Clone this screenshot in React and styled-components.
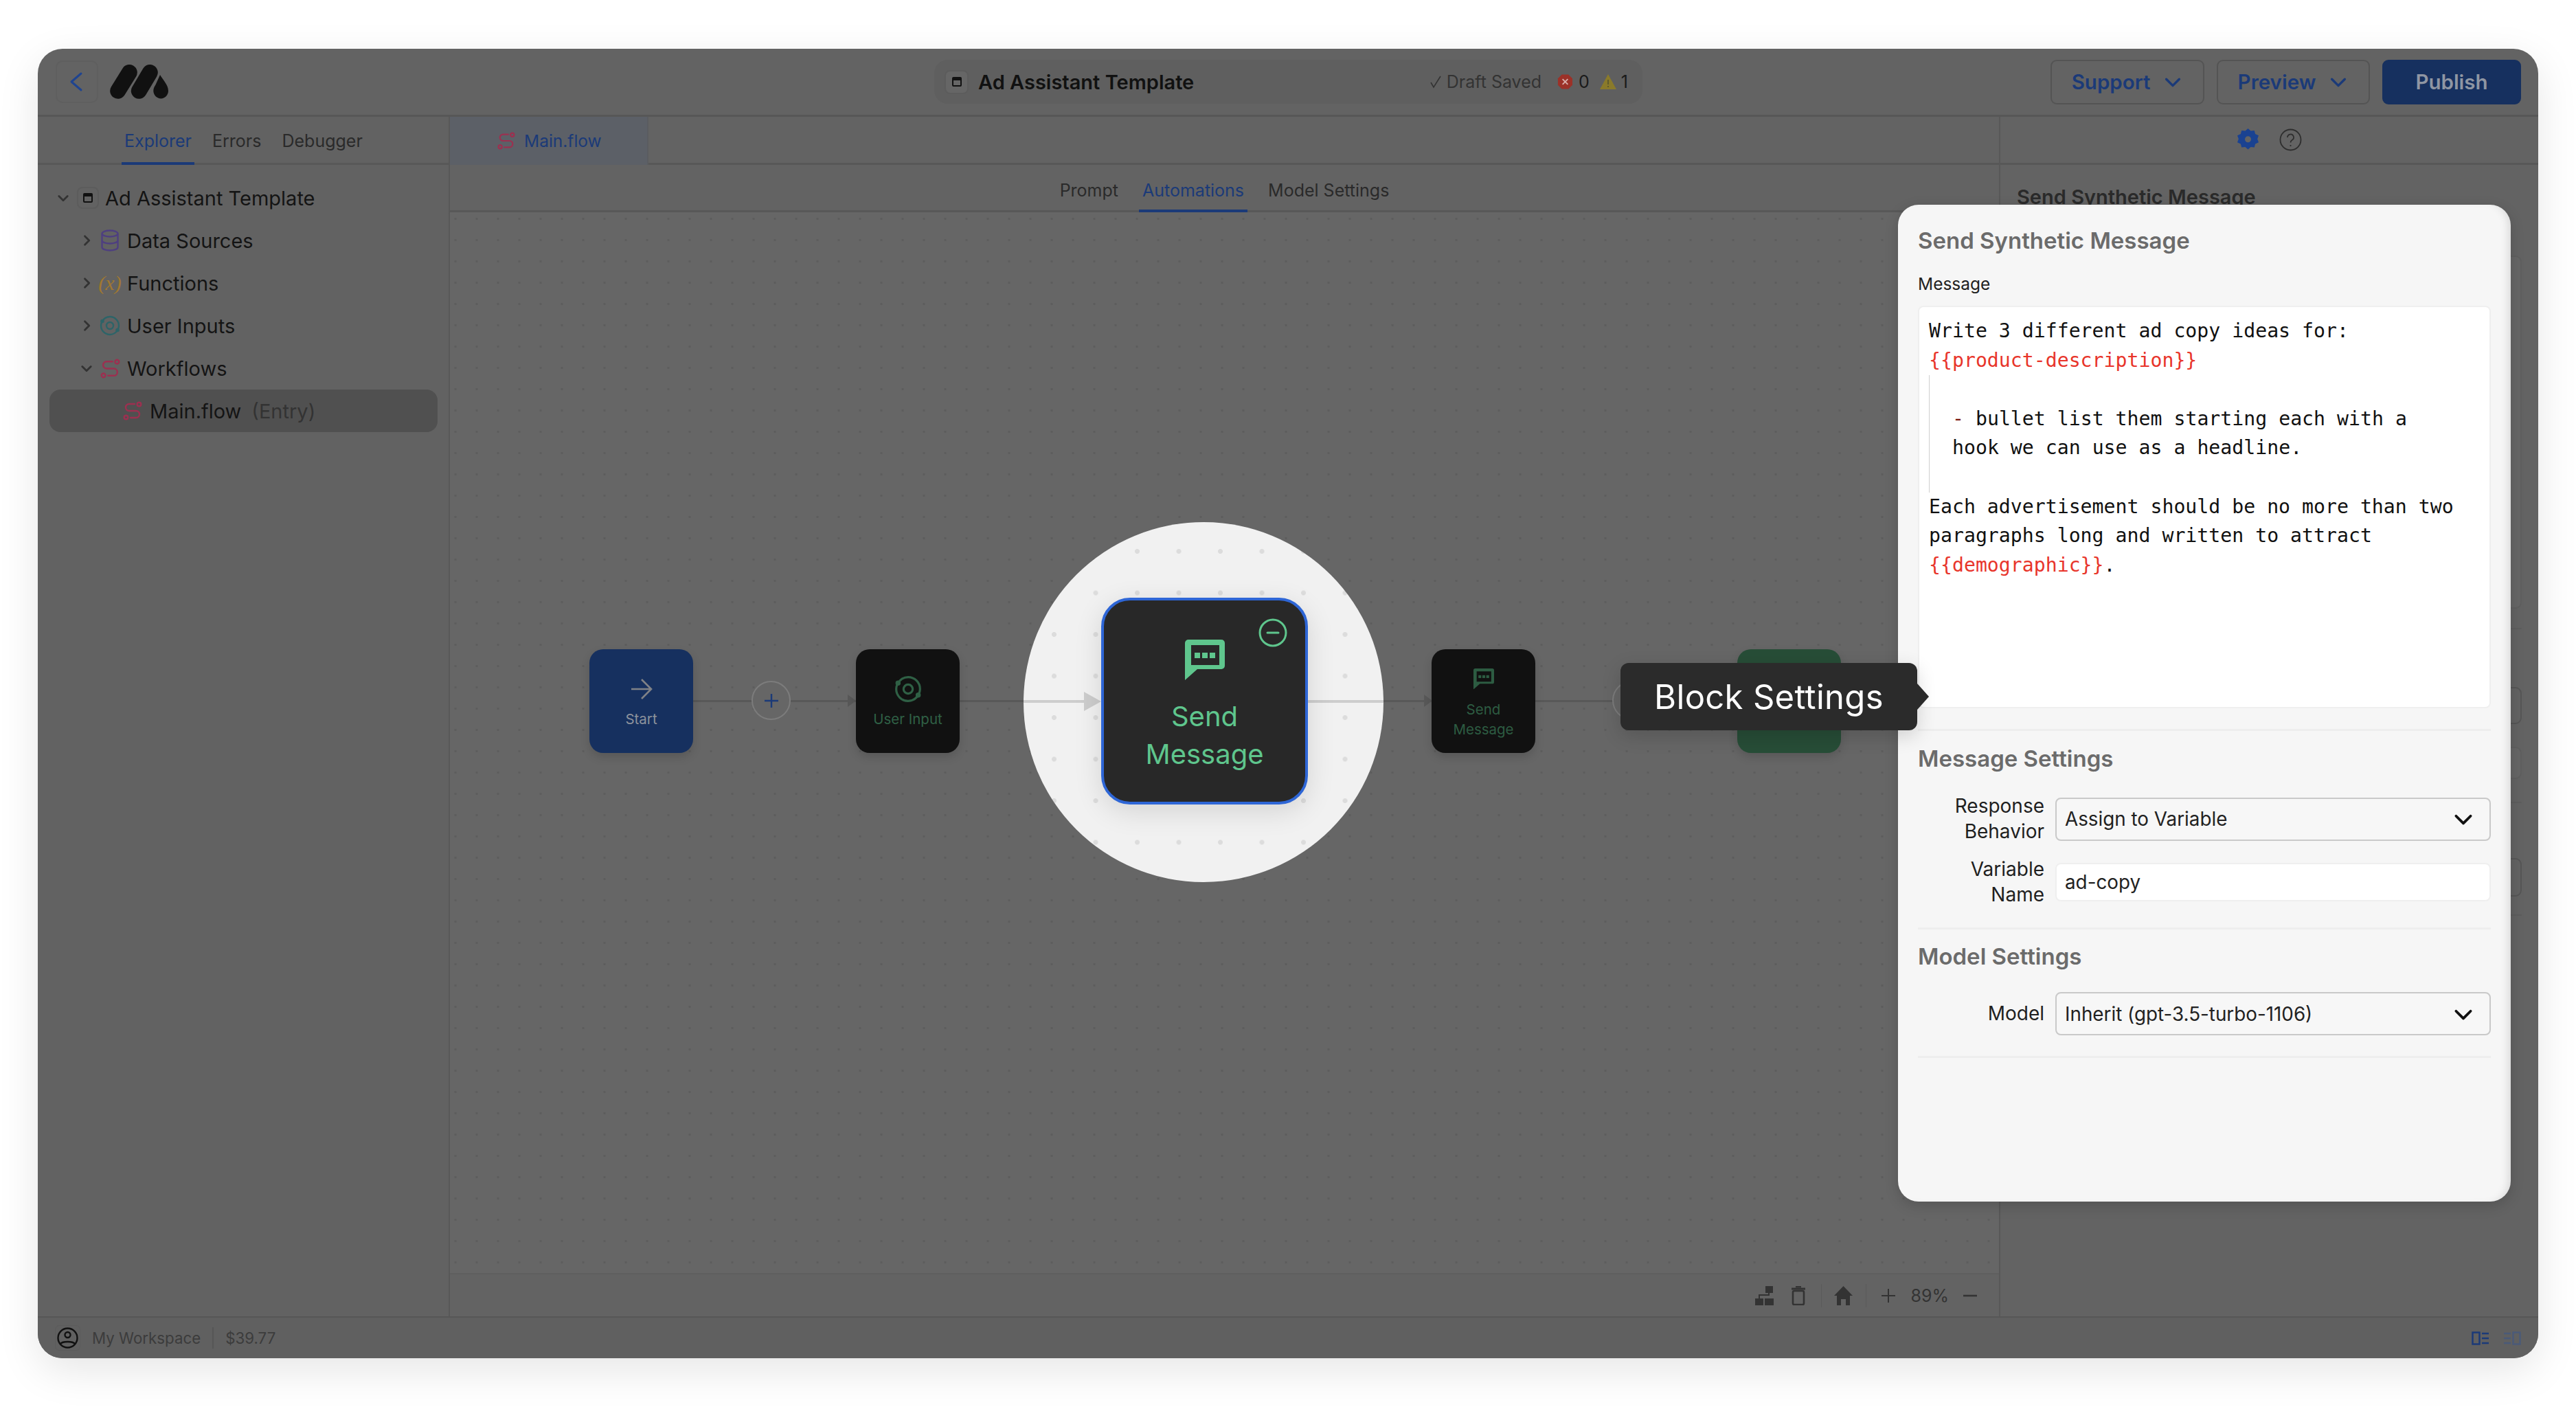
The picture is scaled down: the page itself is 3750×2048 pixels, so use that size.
import React from 'react';
import styled, { createGlobalStyle } from 'styled-components';

const GlobalStyle = createGlobalStyle`
  html, body { margin: 0; padding: 0; background: #fff; }
  body { font-family: Inter, "Liberation Sans", sans-serif; }
  * { box-sizing: border-box; }
`;

const DOT = (bg, dot, size, r) => `
  background-color: ${bg};
  background-image: radial-gradient(circle, ${dot} ${r}px, transparent ${r + 0.6}px);
  background-size: ${size}px ${size}px;
`;

const Page = styled.div`
  width: 3750px;
  height: 2048px;
  padding: 71px 55px 71px 55px;
  overflow: hidden;
  background: #fff;
`;

const Shell = styled.div`
  position: relative;
  width: 3640px;
  height: 1906px;
  display: flex;
  flex-direction: column;
  background: #636363;
  border-radius: 36px;
  box-shadow: 0 18px 60px rgba(0, 0, 0, 0.1);
`;

const Header = styled.header`
  height: 99px;
  flex: none;
  display: flex;
  align-items: center;
  padding: 0 25px 0 26px;
  border-bottom: 3px solid #575757;
`;

const BackBtn = styled.div`
  width: 62px;
  height: 62px;
  display: flex;
  align-items: center;
  justify-content: center;
  border: 2px solid #5f5f5f;
  border-radius: 10px;
`;

const LogoWrap = styled.div`
  margin-left: 17px;
  display: flex;
`;

const HeaderCenter = styled.div`
  flex: 1;
  display: flex;
  padding-left: 1114px;
`;

const DocPill = styled.div`
  width: 1031px;
  height: 64px;
  display: flex;
  align-items: center;
  padding: 0 21px 0 15px;
  background: #5f5f5f;
  border-radius: 20px;
  color: #111;
`;

const DocBox = styled.div`
  width: ${p => p.$size}px;
  height: ${p => p.$size}px;
  flex: none;
  display: flex;
  align-items: center;
  justify-content: center;
  background: ${p => p.$fill ? '#666' : 'transparent'};
  border: 2px solid #5c5c5c;
  border-radius: 8px;
`;

const DocTitle = styled.div`
  margin-left: 14px;
  font-size: 29px;
  font-weight: 600;
  color: #111;
  white-space: nowrap;
`;

const SaveGroup = styled.div`
  margin-left: auto;
  display: flex;
  align-items: center;
  font-size: 25px;
  color: #333;
`;

const Saved = styled.span`
  margin: 0 23px 0 6px;
`;

const Count = styled.span`
  margin: 0 14px 0 8px;
  color: #1a1a1a;
  &:last-child { margin: 0 0 0 6px; }
`;

const HeaderBtn = styled.div`
  width: ${p => p.$w}px;
  height: 65px;
  margin-left: ${p => p.$ml}px;
  display: flex;
  align-items: center;
  justify-content: center;
  gap: 18px;
  font-size: 29.5px;
  font-weight: 600;
  border-radius: 9px;
  color: ${p => p.$primary ? '#8f96a3' : '#1b3a78'};
  background: ${p => p.$primary ? '#16305f' : 'transparent'};
  border: 2px solid ${p => p.$primary ? '#16305f' : '#545454'};
`;

const Body = styled.div`
  flex: 1;
  min-height: 0;
  display: flex;
`;

const Sidebar = styled.aside`
  width: 600px;
  flex: none;
  background: #626262;
  border-right: 2px solid #585858;
`;

const TabRow = styled.div`
  height: 70px;
  display: flex;
  align-items: stretch;
  padding-left: ${p => p.$pl || 0}px;
  gap: ${p => p.$gap || 0}px;
  border-bottom: 3px solid #585858;
`;

const Tab = styled.div`
  display: flex;
  align-items: center;
  padding: 4px 4px 0;
  margin-bottom: -3px;
  font-size: 25px;
  color: ${p => p.$active ? '#1b3a78' : '#2a2a2a'};
  border-bottom: 4px solid ${p => p.$active ? '#1b3a78' : 'transparent'};
`;

const Tree = styled.div`
  padding: 17px 16px 0 17px;
`;

const Row = styled.div`
  height: 62px;
  display: flex;
  align-items: center;
  padding-left: ${p => p.$indent}px;
  font-size: 29px;
  color: #141414;
  border-radius: 16px;
  background: ${p => p.$selected ? '#505050' : 'transparent'};
`;

const RowChevron = styled.div`
  width: ${p => p.$w}px;
  flex: none;
  display: flex;
  justify-content: center;
`;

const RowIcon = styled.div`
  width: 30px;
  height: 32px;
  flex: none;
  display: flex;
  align-items: center;
  justify-content: center;
  margin-right: ${p => p.$mr}px;
`;

const TreeTitle = styled.span`
  margin-left: 9px;
`;

const Muted = styled.span`
  margin-left: 15px;
  color: #333;
`;

const FnGlyph = styled.span`
  font-family: "Liberation Serif", serif;
  font-style: italic;
  font-size: 30px;
  color: #a07830;
  white-space: nowrap;
`;

const Main = styled.main`
  flex: 1;
  min-width: 0;
  display: flex;
  flex-direction: column;
`;

const FileTab = styled.div`
  width: 289px;
  display: flex;
  align-items: center;
  gap: 13px;
  padding-left: 69px;
  margin-bottom: -3px;
  background: #5c6067;
  border-right: 2px solid #5a5c60;
  font-size: 24.5px;
  color: #1b3a78;
`;

const SubTabs = styled.div`
  height: 69px;
  flex: none;
  display: flex;
  justify-content: center;
  gap: 25px;
  border-bottom: 3px solid #585858;
`;

const SubTab = styled(Tab)`
  padding: 8px 5px 0;
`;

const Canvas = styled.div`
  position: relative;
  flex: 1;
  min-height: 0;
  ${DOT('#666', '#5d5d5d', 31, 1.4)}
  background-position: -7.5px -6px;
`;

const Node = styled.div`
  position: absolute;
  left: ${p => p.$x}px;
  top: 636px;
  width: 151px;
  height: 151px;
  display: flex;
  flex-direction: column;
  align-items: center;
  justify-content: center;
  gap: ${p => p.$gap}px;
  padding-top: ${p => p.$pt || 0}px;
  background: ${p => p.$bg};
  color: ${p => p.$fg};
  border-radius: 20px;
  font-size: 20.5px;
  line-height: 29px;
  text-align: center;
  box-shadow: 0 6px 14px rgba(0, 0, 0, 0.14);
`;

const Wire = styled.div`
  position: absolute;
  left: ${p => p.$x}px;
  width: ${p => p.$w}px;
  top: 710px;
  height: 3px;
  background: #585858;
`;

const ArrowHead = styled.div`
  position: absolute;
  left: ${p => p.$x}px;
  top: 702px;
  width: 0;
  height: 0;
  border-left: 12px solid #585858;
  border-top: 9px solid transparent;
  border-bottom: 9px solid transparent;
`;

const PlusCircle = styled.div`
  position: absolute;
  left: ${p => p.$x}px;
  top: 682px;
  width: 57px;
  height: 57px;
  display: flex;
  align-items: center;
  justify-content: center;
  border: 2px solid #7c7c7c;
  border-radius: 50%;
  background: #666;
`;

const CanvasBar = styled.div`
  height: 63px;
  flex: none;
  display: flex;
  align-items: center;
  justify-content: flex-end;
  padding-right: 32px;
  background: #636363;
  border-top: 2px solid #5f5f5f;
  font-size: 25px;
  color: #333;
`;

const BarGap = styled.span`
  width: 26px;
`;

const BarSep = styled.div`
  width: 1px;
  height: 34px;
  margin: 0 ${p => p.$r}px 0 ${p => p.$l}px;
  background: #5a5a5a;
`;

const ZoomText = styled.span`
  margin: 0 21px 0 22px;
`;

const RightPane = styled.aside`
  position: relative;
  width: 785px;
  flex: none;
  border-left: 2px solid #585858;
`;

const PaneIcons = styled.div`
  height: 70px;
  display: flex;
  align-items: center;
  justify-content: center;
  gap: 29px;
  border-bottom: 3px solid #585858;
`;

const PaneTitle = styled.div`
  padding: 27px 24px 0;
  height: 56px;
  font-size: 29px;
  font-weight: 600;
  line-height: 40px;
  color: #2a2a2a;
`;

const GhostStack = styled.div`
  display: flex;
  flex-direction: column;
  padding: 76px 24px 0;
`;

const Ghost = styled.div`
  height: ${p => p.$h}px;
  margin-bottom: ${p => p.$mb}px;
  background: ${p => p.$fill || 'transparent'};
  border: 2px solid ${p => p.$line};
  border-radius: 9px;
`;

const GhostLine = styled.div`
  height: 2px;
  margin-bottom: ${p => p.$mb}px;
  background: #5d5d5d;
`;

const Status = styled.footer`
  height: 61px;
  flex: none;
  display: flex;
  align-items: center;
  padding: 0 25px 0 25px;
  border-top: 2px solid #565656;
  background: #606060;
  border-radius: 0 0 36px 36px;
  font-size: 22.3px;
  color: #3c3c3c;
`;

const Avatar = styled.div`
  width: 37px;
  height: 37px;
  display: flex;
  align-items: center;
  justify-content: center;
  margin-right: 17px;
  border: 1px solid #5c5c5c;
  border-radius: 6px;
`;

const StatusSep = styled.div`
  width: 2px;
  height: 31px;
  margin: 0 17px;
  background: #565656;
`;

const StatusRight = styled.div`
  margin-left: auto;
  display: flex;
  gap: 20px;
`;

/* overlays are placed on the shell, which starts at 55,71 on the page */
const Spotlight = styled.div`
  position: absolute;
  left: 1435px;
  top: 689px;
  width: 524px;
  height: 524px;
  border-radius: 50%;
  overflow: hidden;
  ${DOT('#f1f1f1', '#dcdcdc', 60.5, 3.2)}
  background-position: 14.25px 12.25px;
`;

const SpotWire = styled.div`
  position: absolute;
  top: 259px;
  left: ${p => p.$x}px;
  width: ${p => p.$w}px;
  height: 4px;
  background: #cdcdcd;
`;

const SpotArrow = styled.div`
  position: absolute;
  left: 88px;
  top: 247px;
  width: 0;
  height: 0;
  border-left: 25px solid #cdcdcd;
  border-top: 14px solid transparent;
  border-bottom: 14px solid transparent;
`;

const BigNode = styled.div`
  position: absolute;
  left: 113px;
  top: 110px;
  width: 301px;
  height: 301px;
  display: flex;
  flex-direction: column;
  align-items: center;
  background: #282828;
  border: 4px solid #2e66d6;
  border-radius: 42px;
  box-shadow: 0 10px 40px rgba(0, 0, 0, 0.12);
  color: #5fc68d;
  font-size: 40px;
  line-height: 55px;
  text-align: center;
  padding-top: 57px;
`;

const BigLabel = styled.div`
  margin-top: 25px;
`;

const MinusBtn = styled.div`
  position: absolute;
  right: 26px;
  top: 26px;
  display: flex;
`;

const Tooltip = styled.div`
  position: absolute;
  left: 2304px;
  top: 894px;
  width: 432px;
  height: 98px;
  display: flex;
  align-items: center;
  justify-content: center;
  background: #2b2b2b;
  color: #fff;
  font-size: 49px;
  letter-spacing: 0.3px;
  border-radius: 12px;
  z-index: 3;
  box-shadow: 0 8px 28px rgba(0, 0, 0, 0.16);
  &::after {
    content: '';
    position: absolute;
    left: 100%;
    top: 30px;
    border-left: 17px solid #2b2b2b;
    border-top: 19px solid transparent;
    border-bottom: 19px solid transparent;
  }
`;

const Panel = styled.div`
  position: absolute;
  left: 2708px;
  top: 227px;
  width: 892px;
  height: 1451px;
  padding: 27px 29px 0;
  background: #f6f6f6;
  border-radius: 30px;
  box-shadow: 0 6px 20px rgba(0, 0, 0, 0.16), inset -10px 0 14px -8px rgba(0, 0, 0, 0.14);
  z-index: 2;
`;

const PanelTitle = styled.div`
  height: 50px;
  display: flex;
  align-items: center;
  font-size: 33px;
  font-weight: 600;
  color: #6b6b6b;
`;

const FieldLabel = styled.div`
  margin-top: 22px;
  height: 32px;
  display: flex;
  align-items: center;
  font-size: 24.5px;
  color: #1f1f1f;
`;

const Editor = styled.div`
  margin-top: 16px;
  height: 586px;
  padding: 14px 14px;
  background: #fff;
  border: 2px solid #efefef;
  border-radius: 8px;
  font-family: "DejaVu Sans Mono", "Liberation Mono", monospace;
  font-size: 28.2px;
  line-height: 42.6px;
  color: #111;
  white-space: pre;
`;

const Indented = styled.div`
  padding-left: 33px;
  border-left: 1px solid #cfcfcf;
`;

const Token = styled.span`
  color: #e8352b;
`;

const Dash = styled.span`
  color: #7a1a10;
`;

const Divider = styled.div`
  height: 3px;
  margin-top: ${p => p.$mt}px;
  background: #eeeeee;
`;

const Section = styled.div`
  margin-top: ${p => p.$mt}px;
`;

const FieldRow = styled.div`
  display: grid;
  grid-template-columns: 184px 1fr;
  gap: 16px;
  align-items: center;
  margin-top: ${p => p.$mt}px;
`;

const RowLabel = styled.div`
  text-align: right;
  font-size: 28px;
  line-height: 37px;
  color: #1f1f1f;
`;

const SelectBox = styled.div`
  height: ${p => p.$h || 63}px;
  display: flex;
  align-items: center;
  justify-content: space-between;
  padding: 0 21px 0 12px;
  background: ${p => p.$input ? '#fff' : '#f7f7f7'};
  border: 2px solid ${p => p.$input ? '#efefef' : '#c9c9c9'};
  border-radius: 8px;
  font-size: 27.8px;
  color: #222;
`;

const LayoutSvg = styled.svg`
  transform: ${p => p.$flip ? 'scaleX(-1)' : 'none'};
`;

const Chevron = ({ dir = 'down', size = 16, color = '#333', width = 2.2 }) => {
  const d = {
    down: 'M3 6l5 5 5-5',
    right: 'M6 3l5 5-5 5',
    left: 'M11 2L4 8l7 6',
  }[dir];
  return (
    <svg width={size} height={size} viewBox="0 0 16 16" fill="none" stroke={color} strokeWidth={width} strokeLinecap="round" strokeLinejoin="round">
      <path d={d} />
    </svg>
  );
};

const Logo = () => (
  <svg width="86" height="50" viewBox="0 0 86 50" fill="none" stroke="#111" strokeWidth="23" strokeLinecap="round">
    <path d="M11.700 38.300L28.300 11.500" />
    <path d="M42.300 38.300L58.300 11.500" />
    <path stroke="none" fill="#111" d="M73 15c3 6 12 14 12 23.300C85 44.500 80 49.500 74.300 49.500S63.300 44.500 63.300 38.300c0-3.300 1.500-6.300 3-8.500z" />
  </svg>
);

const DocIcon = ({ size = 16 }) => (
  <svg width={size} height={size} viewBox="0 0 16 16" fill="none" stroke="#111" strokeWidth="2">
    <rect x="2" y="2" width="12" height="12" rx="1" />
    <path d="M2 4.500h12" strokeWidth="3" />
  </svg>
);

const FlowIcon = ({ size = 28, color = '#9c3050' }) => (
  <svg width={size} height={size} viewBox="0 0 28 28" fill="none" stroke={color} strokeWidth="2.400" strokeLinecap="round">
    <circle cx="23.500" cy="4.500" r="2.800" />
    <circle cx="4.500" cy="23.500" r="2.800" />
    <path d="M17 4H9a5 5 0 0 0 0 10h10a5 5 0 0 1 0 10h-8" />
  </svg>
);

const DbIcon = () => (
  <svg width="28" height="32" viewBox="0 0 28 32" fill="none" stroke="#4e3f80" strokeWidth="2.400">
    <ellipse cx="14" cy="6" rx="11.500" ry="4.500" />
    <path d="M2.500 6v20c0 2.500 5 4.500 11.500 4.500s11.500-2 11.500-4.500V6" />
    <path d="M2.500 16c0 2.500 5 4.500 11.500 4.500s11.500-2 11.500-4.500" />
  </svg>
);

const InputIcon = ({ color = '#2d6468', size = 30 }) => (
  <svg width={size} height={size} viewBox="0 0 30 30" fill="none" stroke={color} strokeWidth="2.400" strokeLinecap="round">
    <circle cx="15" cy="15" r="5" />
    <path d="M4 8.500A13 13 0 0 1 15 2a13 13 0 0 1 13 13c0 2-.5 3.800-1.300 5.500" />
    <path d="M26 21.500A13 13 0 0 1 15 28 13 13 0 0 1 2 15c0-2 .5-3.800 1.300-5.500" />
    <circle cx="4" cy="8.500" r="1.600" fill={color} />
    <circle cx="26" cy="21.500" r="1.600" fill={color} />
  </svg>
);

const BubbleIcon = ({ width, color }) => (
  <svg width={width} viewBox="0 0 58 59" fill={color}>
    <path fillRule="evenodd" d="M5 0h48a5 5 0 0 1 5 5v33a5 5 0 0 1-5 5H18L0 59V5a5 5 0 0 1 5-5zm4 8v29h41V8z" />
    <rect x="14" y="19" width="8" height="8" />
    <rect x="25" y="19" width="8" height="8" />
    <rect x="36" y="19" width="8" height="8" />
  </svg>
);

const Plus = ({ size = 20, color = '#1b3a78', width = 2.400 }) => (
  <svg width={size} height={size} viewBox="0 0 20 20" stroke={color} strokeWidth={width}>
    <path d="M10 0v20M0 10h20" />
  </svg>
);

const ArrowRight = () => (
  <svg width="32" height="32" viewBox="0 0 32 32" fill="none" stroke="#808287" strokeWidth="2.600">
    <path d="M1 16h29M16 2l14 14-14 14" />
  </svg>
);

const WarnIcons = () => (
  <>
    <svg width="23" height="24" viewBox="0 0 24 24">
      <path d="M7 1h10l6 6v10l-6 6H7l-6-6V7z" fill="#9c3128" />
      <path d="M8 8l8 8M16 8l-8 8" stroke="#d9b0ac" strokeWidth="2" />
    </svg>
    <Count>0</Count>
    <svg width="26" height="24" viewBox="0 0 26 24">
      <path d="M13 1l12 22H1z" fill="#8a7a2a" />
      <path d="M13 9v7M13 18v2" stroke="#5e5a2c" strokeWidth="2" />
    </svg>
    <Count>1</Count>
  </>
);

const Gear = () => (
  <svg width="33" height="33" viewBox="0 0 33 33">
    <path fillRule="evenodd" fill="#1a4291" d="M16.500 0l4 3.500 5.300-.6 1.300 5.100 4.900 2.200-1.800 5 1.800 5-4.900 2.200-1.300 5.100-5.300-.6-4 3.500-4-3.500-5.300.6-1.300-5.100L1 20.200l1.800-5L1 10.200 5.900 8l1.300-5.100 5.300.6zm0 11.200a4.500 4.500 0 1 0 0 9 4.500 4.500 0 0 0 0-9z" />
  </svg>
);

const HelpIcon = () => (
  <svg width="33" height="33" viewBox="0 0 33 33" fill="none" stroke="#2e2e2e" strokeWidth="1.800">
    <circle cx="16.500" cy="16.500" r="15" />
    <path d="M12 13a4.500 4.500 0 1 1 6.500 4c-1.500.8-2 1.600-2 3.500M16.500 24v2" />
  </svg>
);

const OrgIcon = () => (
  <svg width="27" height="28" viewBox="0 0 27 28" fill="#333">
    <rect x="15" y="0" width="11" height="10" />
    <rect x="0" y="18" width="12" height="10" />
    <rect x="14" y="18" width="13" height="10" />
    <path d="M19 10h2v4h-14v4H5v-6h14z" />
  </svg>
);

const TrashIcon = () => (
  <svg width="20" height="28" viewBox="0 0 20 28" fill="none" stroke="#333" strokeWidth="2.600">
    <path d="M0 4h20" strokeWidth="3" />
    <path d="M6 1h8" />
    <rect x="2" y="7" width="16" height="20" rx="2" />
  </svg>
);

const HomeIcon = () => (
  <svg width="27" height="28" viewBox="0 0 27 28" fill="#333">
    <path d="M13.500 0L27 14h-4v14h-6v-9h-7v9H4V14H0z" />
  </svg>
);

const MinusGlyph = () => (
  <svg width="20" height="20" viewBox="0 0 20 20" stroke="#333" strokeWidth="2.600">
    <path d="M0 10h20" />
  </svg>
);

const AvatarIcon = () => (
  <svg width="31" height="31" viewBox="0 0 31 31" fill="none" stroke="#111" strokeWidth="2.400">
    <circle cx="15.500" cy="15.500" r="14" />
    <circle cx="15.500" cy="11" r="4" />
    <path d="M5 24c3-4 18-4 21 0" />
  </svg>
);

const LayoutIcon = ({ flip, faded }) => (
  <LayoutSvg $flip={flip} width="26" height="20" viewBox="0 0 26 20" fill="none" stroke={faded ? '#4a5a78' : '#1b3a78'} strokeWidth="2.500">
    <rect x="1.500" y="1.500" width="10" height="17" />
    <path d="M15 3h10M15 10h10M15 17h10" />
  </LayoutSvg>
);

const treeRows = [
  { label: 'Data Sources', open: false, icon: <DbIcon /> },
  { label: 'Functions', open: false, icon: <FnGlyph>(x)</FnGlyph> },
  { label: 'User Inputs', open: false, icon: <InputIcon /> },
  { label: 'Workflows', open: true, icon: <FlowIcon size={29} /> },
];

const App = () => (
  <>
    <GlobalStyle />
    <Page>
      <Shell>
        <Header>
          <BackBtn><Chevron dir="left" size={32} color="#1f4490" width={1.500} /></BackBtn>
          <LogoWrap><Logo /></LogoWrap>
          <HeaderCenter>
            <DocPill>
              <DocBox $size={35} $fill><DocIcon /></DocBox>
              <DocTitle>Ad Assistant Template</DocTitle>
              <SaveGroup>
                <svg width="20" height="24" viewBox="0 0 20 24" fill="none" stroke="#333" strokeWidth="1.600"><path d="M3 13l4 7L17 4" /></svg>
                <Saved>Draft Saved</Saved>
                <WarnIcons />
              </SaveGroup>
            </DocPill>
          </HeaderCenter>
          <HeaderBtn $w={224} $ml={-1}>Support <Chevron size={30} color="#1b3a78" width={1.800} /></HeaderBtn>
          <HeaderBtn $w={223} $ml={18}>Preview <Chevron size={30} color="#1b3a78" width={1.800} /></HeaderBtn>
          <HeaderBtn $w={202} $ml={18} $primary>Publish</HeaderBtn>
        </Header>
        <Body>
          <Sidebar>
            <TabRow $pl={122} $gap={22}>
              <Tab $active>Explorer</Tab>
              <Tab>Errors</Tab>
              <Tab>Debugger</Tab>
            </TabRow>
            <Tree>
              <Row $indent={0}>
                <RowChevron $w={40}><Chevron size={20} /></RowChevron>
                <DocBox $size={32}><DocIcon size={16} /></DocBox>
                <TreeTitle>Ad Assistant Template</TreeTitle>
              </Row>
              {treeRows.map(r => (
                <Row key={r.label} $indent={35}>
                  <RowChevron $w={38}><Chevron dir={r.open ? 'down' : 'right'} size={20} /></RowChevron>
                  <RowIcon $mr={10}>{r.icon}</RowIcon>
                  {r.label}
                </Row>
              ))}
              <Row $selected $indent={106}>
                <RowIcon $mr={10}><FlowIcon size={28} /></RowIcon>
                Main.flow
                <Muted>(Entry)</Muted>
              </Row>
            </Tree>
          </Sidebar>
          <Main>
            <TabRow>
              <FileTab><FlowIcon size={26} />Main.flow</FileTab>
            </TabRow>
            <SubTabs>
              <SubTab>Prompt</SubTab>
              <SubTab $active>Automations</SubTab>
              <SubTab>Model Settings</SubTab>
            </SubTabs>
            <Canvas>
              <Wire $x={354} $w={86} />
              <Wire $x={496} $w={98} />
              <ArrowHead $x={579} />
              <Wire $x={742} $w={100} />
              <Wire $x={1359} $w={70} />
              <ArrowHead $x={1418} />
              <Wire $x={1579} $w={120} />
              <Node $x={203} $bg="#16305f" $fg="#8d929c" $gap={13} $pt={6}>
                <ArrowRight />
                Start
              </Node>
              <PlusCircle $x={439}><Plus /></PlusCircle>
              <Node $x={591} $bg="#111" $fg="#2f6045" $gap={9} $pt={2}>
                <InputIcon color="#2f6045" size={40} />
                User Input
              </Node>
              <Node $x={1429} $bg="#111" $fg="#2d5c42" $gap={15} $pt={8}>
                <BubbleIcon width={30} color="#2d5c42" />
                <div>Send<br />Message</div>
              </Node>
              <PlusCircle $x={1692} />
              <Node $x={1874} $bg="#274d37" $fg="#274d37" />
            </Canvas>
            <CanvasBar>
              <OrgIcon />
              <BarGap />
              <TrashIcon />
              <BarSep $l={23} $r={18} />
              <HomeIcon />
              <BarSep $l={19} $r={22} />
              <Plus size={20} color="#333" width={2} />
              <ZoomText>89%</ZoomText>
              <MinusGlyph />
            </CanvasBar>
          </Main>
          <RightPane>
            <PaneIcons>
              <Gear />
              <HelpIcon />
            </PaneIcons>
            <PaneTitle>Send Synthetic Message</PaneTitle>
            <GhostStack>
              <Ghost $h={514} $mb={28} $line="#5f5f5f" $fill="#666" />
              <GhostLine $mb={84} />
              <Ghost $h={54} $mb={33} $line="#565656" />
              <Ghost $h={47} $mb={33} $line="#5f5f5f" $fill="#666" />
              <GhostLine $mb={80} />
              <Ghost $h={56} $mb={26} $line="#565656" />
              <GhostLine $mb={0} />
            </GhostStack>
          </RightPane>
        </Body>
        <Status>
          <Avatar><AvatarIcon /></Avatar>
          My Workspace
          <StatusSep />
          $39.77
          <StatusRight>
            <LayoutIcon />
            <LayoutIcon flip faded />
          </StatusRight>
        </Status>
        <Spotlight>
          <SpotWire $x={0} $w={100} />
          <SpotArrow />
          <SpotWire $x={410} $w={120} />
          <BigNode>
            <MinusBtn>
              <svg width="42" height="42" viewBox="0 0 42 42" fill="none" stroke="#5fc68d" strokeWidth="3">
                <circle cx="21" cy="21" r="19" />
                <path d="M13 21h16" strokeLinecap="round" />
              </svg>
            </MinusBtn>
            <BubbleIcon width={58} color="#5fc68d" />
            <BigLabel>Send<br />Message</BigLabel>
          </BigNode>
        </Spotlight>
        <Tooltip>Block Settings</Tooltip>
        <Panel>
          <PanelTitle>Send Synthetic Message</PanelTitle>
          <FieldLabel>Message</FieldLabel>
          <Editor>
            <div>Write 3 different ad copy ideas for:</div>
            <div><Token>{'{{product-description}}'}</Token></div>
            <Indented>
              <div> </div>
              <div><Dash>-</Dash> bullet list them starting each with a</div>
              <div>hook we can use as a headline.</div>
              <div> </div>
            </Indented>
            <div>Each advertisement should be no more than two</div>
            <div>paragraphs long and written to attract</div>
            <div><Token>{'{{demographic}}'}</Token>.</div>
          </Editor>
          <Divider $mt={30} />
          <Section $mt={15}>
            <PanelTitle>Message Settings</PanelTitle>
          </Section>
          <FieldRow $mt={26}>
            <RowLabel>Response<br />Behavior</RowLabel>
            <SelectBox>Assign to Variable <Chevron size={34} color="#111" width={1.800} /></SelectBox>
          </FieldRow>
          <FieldRow $mt={18}>
            <RowLabel>Variable<br />Name</RowLabel>
            <SelectBox $input $h={56}>ad-copy</SelectBox>
          </FieldRow>
          <Divider $mt={29} />
          <Section $mt={14}>
            <PanelTitle>Model Settings</PanelTitle>
          </Section>
          <FieldRow $mt={27}>
            <RowLabel>Model</RowLabel>
            <SelectBox>Inherit (gpt-3.5-turbo-1106) <Chevron size={34} color="#111" width={1.800} /></SelectBox>
          </FieldRow>
          <Divider $mt={30} />
        </Panel>
      </Shell>
    </Page>
  </>
);

export default App;
